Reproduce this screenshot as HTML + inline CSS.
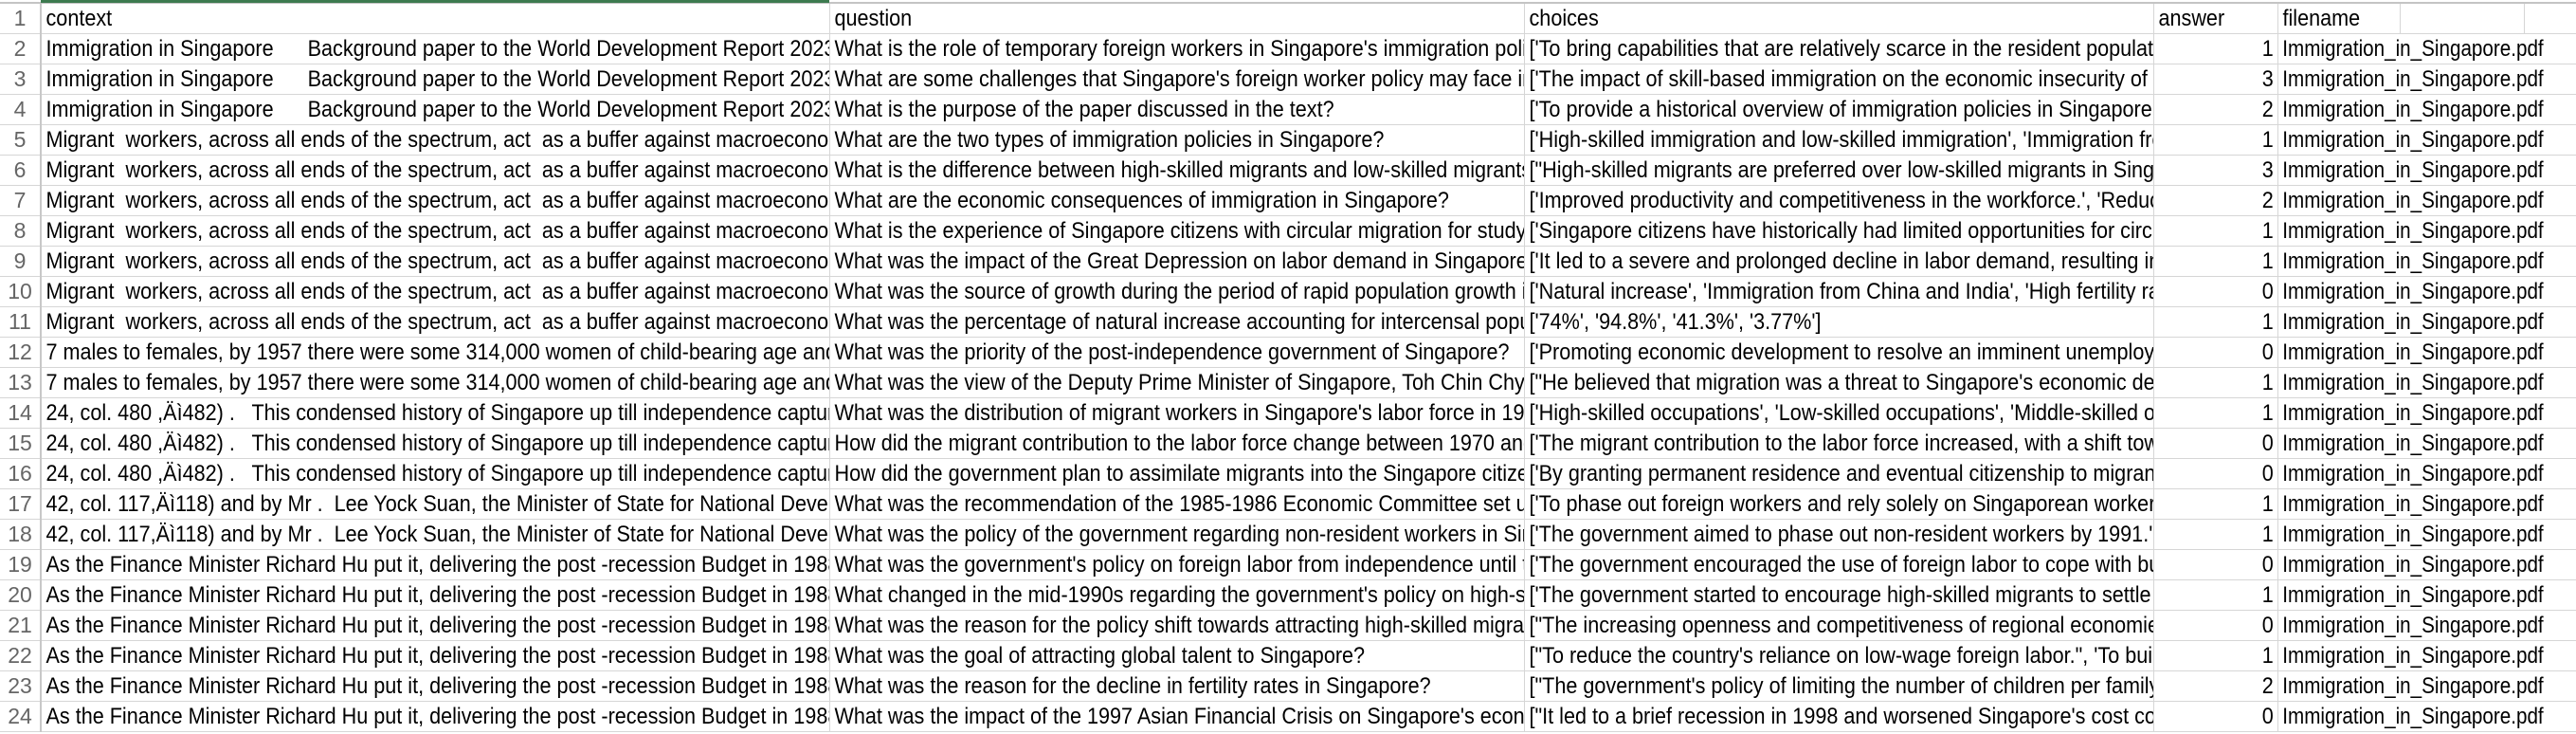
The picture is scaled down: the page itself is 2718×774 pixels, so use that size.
<!DOCTYPE html>
<html><head><meta charset="utf-8">
<style>
html,body{margin:0;padding:0;background:#fff;width:2718px;height:774px;overflow:hidden}
body{position:relative;font-family:"Liberation Sans",Arial,sans-serif;color:#000}
.green{position:absolute;left:43px;top:0;width:832px;height:3px;background:#3d7a4f}
.topline{position:absolute;left:0;top:2px;width:2718px;height:2px;background:#c4c4c4}
table{position:absolute;left:0;top:4px;border-collapse:collapse;table-layout:fixed;width:2790px}
td{height:31px;padding:0;border-right:1.5px solid #d6d6d6;border-bottom:1.5px solid #d6d6d6;overflow:hidden;white-space:pre;font-size:24px;line-height:31px;vertical-align:middle}
td span{display:inline-block;transform:scaleX(.9);transform-origin:0 50%;padding-left:5px}
td.n{color:#666;text-align:center;border-right:2px solid #c8c8c8;font-size:23px}
td.n span{transform:none;padding:0}
td.r{text-align:right}
td.r span{transform-origin:100% 50%;padding:0 4px 0 0}
td.f{overflow:visible;border-right:none}
td.f span{transform:scaleX(.86)}
</style></head><body>
<div class="topline"></div>
<div class="green"></div>
<table>
<colgroup><col style="width:43px"><col style="width:832px"><col style="width:733px"><col style="width:664px"><col style="width:131px"><col style="width:129px"><col style="width:131px"><col style="width:127px"></colgroup>
<tr><td class="n"><span>1</span></td><td><span>context</span></td><td><span>question</span></td><td><span>choices</span></td><td><span>answer</span></td><td><span>filename</span></td><td></td><td></td></tr>
<tr><td class="n"><span>2</span></td><td><span>Immigration in Singapore      Background paper to the World Development Report 2023: Migrants, Refugees and Societies</span></td><td><span>What is the role of temporary foreign workers in Singapore's immigration policy?</span></td><td><span>['To bring capabilities that are relatively scarce in the resident population', '</span></td><td class="r"><span>1</span></td><td class="f" colspan="3"><span>Immigration_in_Singapore.pdf</span></td></tr>
<tr><td class="n"><span>3</span></td><td><span>Immigration in Singapore      Background paper to the World Development Report 2023: Migrants, Refugees and Societies</span></td><td><span>What are some challenges that Singapore's foreign worker policy may face in the future?</span></td><td><span>['The impact of skill-based immigration on the economic insecurity of locals', '</span></td><td class="r"><span>3</span></td><td class="f" colspan="3"><span>Immigration_in_Singapore.pdf</span></td></tr>
<tr><td class="n"><span>4</span></td><td><span>Immigration in Singapore      Background paper to the World Development Report 2023: Migrants, Refugees and Societies</span></td><td><span>What is the purpose of the paper discussed in the text?</span></td><td><span>['To provide a historical overview of immigration policies in Singapore.', '</span></td><td class="r"><span>2</span></td><td class="f" colspan="3"><span>Immigration_in_Singapore.pdf</span></td></tr>
<tr><td class="n"><span>5</span></td><td><span>Migrant  workers, across all ends of the spectrum, act  as a buffer against macroeconomic shocks</span></td><td><span>What are the two types of immigration policies in Singapore?</span></td><td><span>['High-skilled immigration and low-skilled immigration', 'Immigration from abroad'</span></td><td class="r"><span>1</span></td><td class="f" colspan="3"><span>Immigration_in_Singapore.pdf</span></td></tr>
<tr><td class="n"><span>6</span></td><td><span>Migrant  workers, across all ends of the spectrum, act  as a buffer against macroeconomic shocks</span></td><td><span>What is the difference between high-skilled migrants and low-skilled migrants in Singapore?</span></td><td><span>["High-skilled migrants are preferred over low-skilled migrants in Singapore", '</span></td><td class="r"><span>3</span></td><td class="f" colspan="3"><span>Immigration_in_Singapore.pdf</span></td></tr>
<tr><td class="n"><span>7</span></td><td><span>Migrant  workers, across all ends of the spectrum, act  as a buffer against macroeconomic shocks</span></td><td><span>What are the economic consequences of immigration in Singapore?</span></td><td><span>['Improved productivity and competitiveness in the workforce.', 'Reduced wages'</span></td><td class="r"><span>2</span></td><td class="f" colspan="3"><span>Immigration_in_Singapore.pdf</span></td></tr>
<tr><td class="n"><span>8</span></td><td><span>Migrant  workers, across all ends of the spectrum, act  as a buffer against macroeconomic shocks</span></td><td><span>What is the experience of Singapore citizens with circular migration for study?</span></td><td><span>['Singapore citizens have historically had limited opportunities for circular migration'</span></td><td class="r"><span>1</span></td><td class="f" colspan="3"><span>Immigration_in_Singapore.pdf</span></td></tr>
<tr><td class="n"><span>9</span></td><td><span>Migrant  workers, across all ends of the spectrum, act  as a buffer against macroeconomic shocks</span></td><td><span>What was the impact of the Great Depression on labor demand in Singapore?</span></td><td><span>['It led to a severe and prolonged decline in labor demand, resulting in mass'</span></td><td class="r"><span>1</span></td><td class="f" colspan="3"><span>Immigration_in_Singapore.pdf</span></td></tr>
<tr><td class="n"><span>10</span></td><td><span>Migrant  workers, across all ends of the spectrum, act  as a buffer against macroeconomic shocks</span></td><td><span>What was the source of growth during the period of rapid population growth in Singapore?</span></td><td><span>['Natural increase', 'Immigration from China and India', 'High fertility rates'</span></td><td class="r"><span>0</span></td><td class="f" colspan="3"><span>Immigration_in_Singapore.pdf</span></td></tr>
<tr><td class="n"><span>11</span></td><td><span>Migrant  workers, across all ends of the spectrum, act  as a buffer against macroeconomic shocks</span></td><td><span>What was the percentage of natural increase accounting for intercensal population growth?</span></td><td><span>['74%', '94.8%', '41.3%', '3.77%']</span></td><td class="r"><span>1</span></td><td class="f" colspan="3"><span>Immigration_in_Singapore.pdf</span></td></tr>
<tr><td class="n"><span>12</span></td><td><span>7 males to females, by 1957 there were some 314,000 women of child-bearing age and the</span></td><td><span>What was the priority of the post-independence government of Singapore?</span></td><td><span>['Promoting economic development to resolve an imminent unemployment crisis'</span></td><td class="r"><span>0</span></td><td class="f" colspan="3"><span>Immigration_in_Singapore.pdf</span></td></tr>
<tr><td class="n"><span>13</span></td><td><span>7 males to females, by 1957 there were some 314,000 women of child-bearing age and the</span></td><td><span>What was the view of the Deputy Prime Minister of Singapore, Toh Chin Chye, on migration?</span></td><td><span>["He believed that migration was a threat to Singapore's economic development"</span></td><td class="r"><span>1</span></td><td class="f" colspan="3"><span>Immigration_in_Singapore.pdf</span></td></tr>
<tr><td class="n"><span>14</span></td><td><span>24, col. 480 ,Äì482) .   This condensed history of Singapore up till independence captures</span></td><td><span>What was the distribution of migrant workers in Singapore's labor force in 1970?</span></td><td><span>['High-skilled occupations', 'Low-skilled occupations', 'Middle-skilled occupations'</span></td><td class="r"><span>1</span></td><td class="f" colspan="3"><span>Immigration_in_Singapore.pdf</span></td></tr>
<tr><td class="n"><span>15</span></td><td><span>24, col. 480 ,Äì482) .   This condensed history of Singapore up till independence captures</span></td><td><span>How did the migrant contribution to the labor force change between 1970 and 1980?</span></td><td><span>['The migrant contribution to the labor force increased, with a shift towards'</span></td><td class="r"><span>0</span></td><td class="f" colspan="3"><span>Immigration_in_Singapore.pdf</span></td></tr>
<tr><td class="n"><span>16</span></td><td><span>24, col. 480 ,Äì482) .   This condensed history of Singapore up till independence captures</span></td><td><span>How did the government plan to assimilate migrants into the Singapore citizenry?</span></td><td><span>['By granting permanent residence and eventual citizenship to migrants'</span></td><td class="r"><span>0</span></td><td class="f" colspan="3"><span>Immigration_in_Singapore.pdf</span></td></tr>
<tr><td class="n"><span>17</span></td><td><span>42, col. 117,Äì118) and by Mr .  Lee Yock Suan, the Minister of State for National Development</span></td><td><span>What was the recommendation of the 1985-1986 Economic Committee set up by the government?</span></td><td><span>['To phase out foreign workers and rely solely on Singaporean workers.', '</span></td><td class="r"><span>1</span></td><td class="f" colspan="3"><span>Immigration_in_Singapore.pdf</span></td></tr>
<tr><td class="n"><span>18</span></td><td><span>42, col. 117,Äì118) and by Mr .  Lee Yock Suan, the Minister of State for National Development</span></td><td><span>What was the policy of the government regarding non-resident workers in Singapore?</span></td><td><span>['The government aimed to phase out non-resident workers by 1991.', '</span></td><td class="r"><span>1</span></td><td class="f" colspan="3"><span>Immigration_in_Singapore.pdf</span></td></tr>
<tr><td class="n"><span>19</span></td><td><span>As the Finance Minister Richard Hu put it, delivering the post -recession Budget in 1988</span></td><td><span>What was the government's policy on foreign labor from independence until the 1990s?</span></td><td><span>['The government encouraged the use of foreign labor to cope with business'</span></td><td class="r"><span>0</span></td><td class="f" colspan="3"><span>Immigration_in_Singapore.pdf</span></td></tr>
<tr><td class="n"><span>20</span></td><td><span>As the Finance Minister Richard Hu put it, delivering the post -recession Budget in 1988</span></td><td><span>What changed in the mid-1990s regarding the government's policy on high-skilled migrants?</span></td><td><span>['The government started to encourage high-skilled migrants to settle  '</span></td><td class="r"><span>1</span></td><td class="f" colspan="3"><span>Immigration_in_Singapore.pdf</span></td></tr>
<tr><td class="n"><span>21</span></td><td><span>As the Finance Minister Richard Hu put it, delivering the post -recession Budget in 1988</span></td><td><span>What was the reason for the policy shift towards attracting high-skilled migrants?</span></td><td><span>["The increasing openness and competitiveness of regional economies"</span></td><td class="r"><span>0</span></td><td class="f" colspan="3"><span>Immigration_in_Singapore.pdf</span></td></tr>
<tr><td class="n"><span>22</span></td><td><span>As the Finance Minister Richard Hu put it, delivering the post -recession Budget in 1988</span></td><td><span>What was the goal of attracting global talent to Singapore?</span></td><td><span>["To reduce the country's reliance on low-wage foreign labor.", 'To build a'</span></td><td class="r"><span>1</span></td><td class="f" colspan="3"><span>Immigration_in_Singapore.pdf</span></td></tr>
<tr><td class="n"><span>23</span></td><td><span>As the Finance Minister Richard Hu put it, delivering the post -recession Budget in 1988</span></td><td><span>What was the reason for the decline in fertility rates in Singapore?</span></td><td><span>["The government's policy of limiting the number of children per family"</span></td><td class="r"><span>2</span></td><td class="f" colspan="3"><span>Immigration_in_Singapore.pdf</span></td></tr>
<tr><td class="n"><span>24</span></td><td><span>As the Finance Minister Richard Hu put it, delivering the post -recession Budget in 1988</span></td><td><span>What was the impact of the 1997 Asian Financial Crisis on Singapore's economy?</span></td><td><span>["It led to a brief recession in 1998 and worsened Singapore's cost competitiveness"</span></td><td class="r"><span>0</span></td><td class="f" colspan="3"><span>Immigration_in_Singapore.pdf</span></td></tr>
</table>
</body></html>
